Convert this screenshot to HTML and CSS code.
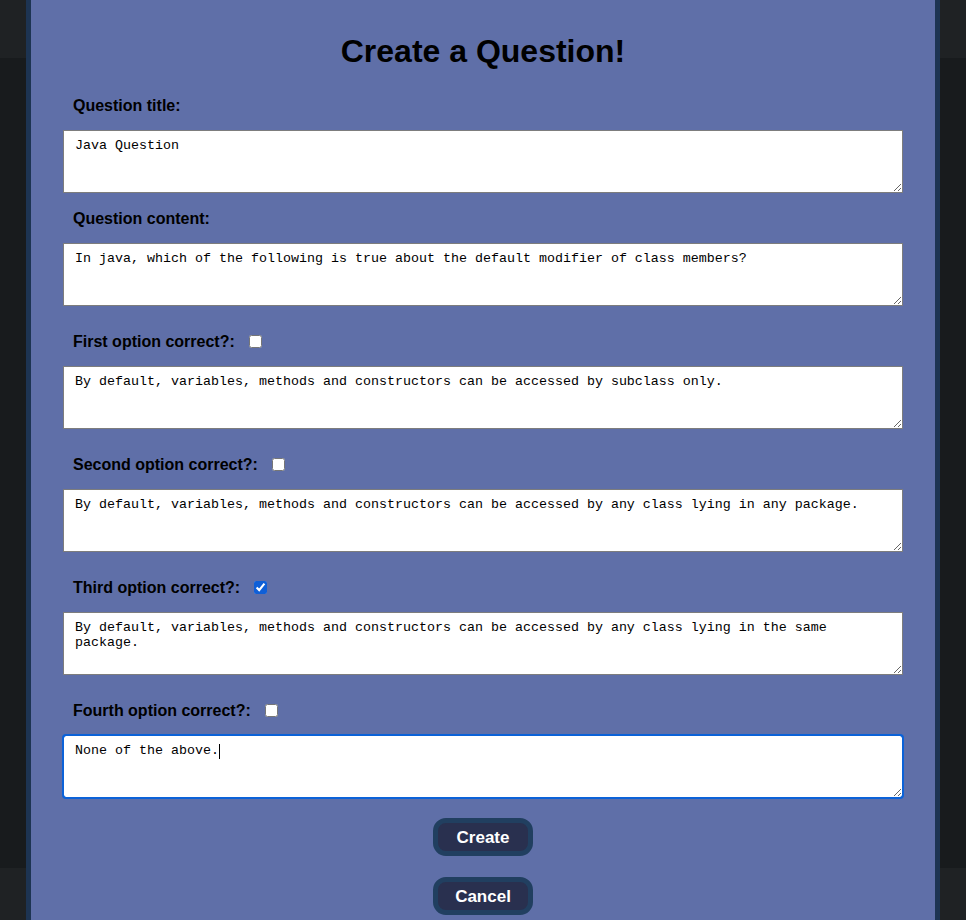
FILE: index.html
```html
<!DOCTYPE html>
<html lang="en">
<head>
<meta charset="utf-8">
<title>Create a Question!</title>
<link rel="stylesheet" href="styles.css">
</head>
<body>
<div class="page">
  <header class="page-header"></header>
  <main class="page-main"></main>
  <footer class="page-footer"></footer>
</div>

<div class="modal">
  <h1 class="modal-title">Create a Question!</h1>
  <form class="question-form">
    <div class="field">
      <label class="field-label">Question title:</label>
      <textarea class="field-input">Java Question</textarea>
    </div>
    <div class="field">
      <label class="field-label">Question content:</label>
      <textarea class="field-input">In java, which of the following is true about the default modifier of class members?</textarea>
    </div>
    <div class="field option">
      <div class="option-row">
        <label class="field-label">First option correct?:</label>
        <input type="checkbox" class="option-check">
      </div>
      <textarea class="field-input">By default, variables, methods and constructors can be accessed by subclass only.</textarea>
    </div>
    <div class="field option">
      <div class="option-row">
        <label class="field-label">Second option correct?:</label>
        <input type="checkbox" class="option-check">
      </div>
      <textarea class="field-input">By default, variables, methods and constructors can be accessed by any class lying in any package.</textarea>
    </div>
    <div class="field option">
      <div class="option-row">
        <label class="field-label">Third option correct?:</label>
        <input type="checkbox" class="option-check" checked>
      </div>
      <textarea class="field-input">By default, variables, methods and constructors can be accessed by any class lying in the same package.</textarea>
    </div>
    <div class="field option">
      <div class="option-row">
        <label class="field-label">Fourth option correct?:</label>
        <input type="checkbox" class="option-check">
      </div>
      <div class="input-wrap">
        <textarea class="field-input focused">None of the above.</textarea>
        <span class="caret"></span>
      </div>
    </div>
    <div class="actions">
      <button type="button" class="btn">Create</button>
      <button type="button" class="btn">Cancel</button>
    </div>
  </form>
</div>
</body>
</html>
```
FILE: styles.css
```css
html, body {
  margin: 0;
  padding: 0;
}

body {
  width: 966px;
  height: 920px;
  overflow: hidden;
  position: relative;
  background: #181b1d;
  font-family: "Liberation Sans", Arial, sans-serif;
}

.page {
  display: flex;
  flex-direction: column;
  height: 920px;
}

.page-header {
  height: 58px;
  background: #1f2224;
}

.page-main {
  flex: 1;
  background: #181b1d;
}

.page-footer {
  height: 52px;
  background: #1f2224;
}

.modal {
  position: absolute;
  left: 26px;
  top: 0;
  width: 914px;
  height: 920px;
  box-sizing: border-box;
  border-left: 5px solid #1d3452;
  border-right: 5px solid #1d3452;
  background: #5f6fa8;
  padding: 33px 32px 0;
}

.modal-title {
  margin: 0 0 26px;
  font-size: 32px;
  line-height: 37px;
  font-weight: bold;
  text-align: center;
  color: #000;
}

.question-form {
  display: flex;
  flex-direction: column;
}

.field {
  display: flex;
  flex-direction: column;
  gap: 15px;
  margin-bottom: 16px;
}

.field.option {
  margin-top: 10px;
}

.field-label {
  display: block;
  padding: 1px 0 0 10px;
  font-size: 16px;
  line-height: 18px;
  font-weight: bold;
  color: #000;
}

.option-row {
  display: flex;
  align-items: center;
  height: 19px;
}

.option-check {
  width: 13px;
  height: 13px;
  margin: 0 0 0 14px;
  accent-color: #0f5fd7;
}

.field-input {
  display: block;
  box-sizing: border-box;
  width: 840px;
  height: 63px;
  margin: 0;
  padding: 7px 11px;
  border: 1px solid #7d7d7d;
  border-radius: 0;
  background: #fff;
  color: #000;
  font-family: "Liberation Mono", "Courier New", monospace;
  font-size: 13.333px;
  line-height: 15px;
  resize: vertical;
  outline: none;
}

.field-input.focused {
  border-color: #0b62d8;
  outline: 2px solid #0b62d8;
  outline-offset: -1px;
  border-radius: 3px;
}

.input-wrap {
  position: relative;
}

.caret {
  position: absolute;
  left: 156px;
  top: 9px;
  width: 1px;
  height: 15px;
  background: #000;
}

.actions {
  display: flex;
  flex-direction: column;
  align-items: center;
  gap: 21px;
  margin-top: 4px;
}

.btn {
  box-sizing: border-box;
  width: 100px;
  height: 38px;
  border: 5px solid #213f60;
  border-radius: 13px;
  background: #29304f;
  color: #fff;
  font-family: "Liberation Sans", Arial, sans-serif;
  font-size: 17px;
  font-weight: bold;
  padding: 2px 0 0;
  cursor: pointer;
}
```
